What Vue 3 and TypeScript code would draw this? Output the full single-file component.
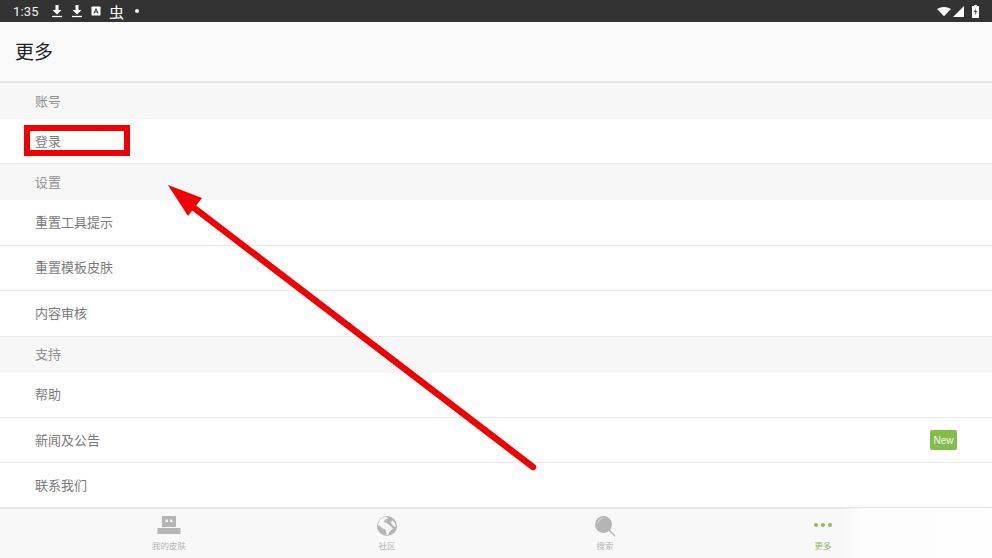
<template>
  <div class="screen">
    <div class="status-bar">
      <span class="clock">1:35</span>
      <div class="status-icons">
        <svg width="12" height="14" viewBox="0 0 12 14"><path d="M4.500 1h3v5h3L6 10.500 1.500 6h3z" fill="#fff" /><path d="M1 12.500h10" stroke="#fff" stroke-width="1.300" /></svg>
        <svg width="12" height="14" viewBox="0 0 12 14"><path d="M4.500 1h3v5h3L6 10.500 1.500 6h3z" fill="#fff" /><path d="M1 12.500h10" stroke="#fff" stroke-width="1.300" /></svg>
        <svg width="10" height="10" viewBox="0 0 11 11"><rect width="10" height="10" x="0.500" y="0.500" rx="1" fill="#fff" /><path d="M3.200 8 5.500 3l2.300 5M4 6.500h3" fill="none" stroke="#333" stroke-width="1.100" /></svg>
        <span class="bug">虫</span>
        <span class="dot"></span>
      </div>
      <div class="status-right">
        <svg width="14" height="11" viewBox="0 0 16 11"><path d="M0 2.500Q8-2 16 2.500L8 11z" fill="#fff" /></svg>
        <svg class="signal" width="11" height="11" viewBox="0 0 11 11"><path d="M11 0v11H0z" fill="#fff" /></svg>
        <svg class="battery" width="7" height="13" viewBox="0 0 7 13"><path d="M2 0h3v1h2v12H0V1h2z" fill="#fff" /><path d="M4 3 2 7h1.500L3 10.500 5 6H3.500z" fill="#333" /></svg>
      </div>
    </div>

    <header class="title-bar">更多</header>

    <main class="list">
      <template v-for="section in sections" :key="section.title">
        <div class="section-title">{{ section.title }}</div>
        <div v-for="row in section.rows" :key="row.label" class="row">
          <span>{{ row.label }}</span>
          <span v-if="row.badge" class="badge">{{ row.badge }}</span>
        </div>
      </template>
    </main>

    <nav class="tabs">
      <div class="tab">
        <svg width="24" height="22" viewBox="0 0 24 22">
          <path d="M5 1h14v11H5z" fill="#b5b5b5" />
          <path d="M0.500 13h23v6h-23z" fill="#b5b5b5" />
          <path d="M8.500 4.500h2.500V7H8.500zM13 4.500h2.500V7H13z" fill="#f6f6f6" />
        </svg>
        <span>我的皮肤</span>
      </div>
      <div class="tab">
        <svg width="22" height="22" viewBox="0 0 22 22">
          <circle cx="11" cy="11" r="10" fill="#b5b5b5" />
          <path d="M12 3.500 9 4.500 7.500 7l3 1 3.500 2.500 3 3-3.500 3-1.500 4-1.500-.5-.5-5-4-2L3 10l-1 1q-.5-5 4-8l4-1.500z" fill="#f6f6f6" />
          <path d="m16 5 3 3 1 4-3-1-2-3z" fill="#f6f6f6" />
        </svg>
        <span>社区</span>
      </div>
      <div class="tab">
        <svg width="22" height="22" viewBox="0 0 22 22">
          <circle cx="9.500" cy="9.500" r="8.500" fill="#b5b5b5" />
          <path d="M3.500 8.500Q4.500 4 8.500 3" fill="none" stroke="#dedede" stroke-width="1" />
          <path d="m15.500 15.500 5.500 5.500" stroke="#b5b5b5" stroke-width="1.400" />
        </svg>
        <span>搜索</span>
      </div>
      <div class="tab active">
        <svg width="22" height="22" viewBox="0 0 22 22">
          <circle cx="4" cy="10" r="2" fill="#8cbb5c" />
          <circle cx="11" cy="10" r="2" fill="#8cbb5c" />
          <circle cx="18" cy="10" r="2" fill="#8cbb5c" />
        </svg>
        <span>更多</span>
      </div>
    </nav>

    <div class="smudge"></div>
    <div class="mark-box"></div>
    <svg class="arrow" width="992" height="558" viewBox="0 0 992 558">
      <path d="M533 467 189 204" stroke="#f00000" stroke-width="6.500" stroke-linecap="round" fill="none" />
      <path d="M168 185 202 198 188 216z" fill="#f00000" />
    </svg>
  </div>
</template>

<script setup lang="ts">
interface Row {
  label: string;
  badge?: string;
}

const sections: { title: string; rows: Row[] }[] = [
  { title: '账号', rows: [{ label: '登录' }] },
  { title: '设置', rows: [{ label: '重置工具提示' }, { label: '重置模板皮肤' }, { label: '内容审核' }] },
  { title: '支持', rows: [{ label: '帮助' }, { label: '新闻及公告', badge: 'New' }, { label: '联系我们' }] },
];
</script>

<style scoped>
.screen {
  position: relative;
  width: 992px;
  height: 558px;
  overflow: hidden;
  display: flex;
  flex-direction: column;
  background: #fff;
  font-family: "Liberation Sans", "Noto Sans CJK SC", sans-serif;
}

.status-bar {
  height: 22px;
  flex: none;
  display: flex;
  align-items: center;
  padding: 0 13px 0 13px;
  background: #333;
  color: #f2f2f2;
}

.clock {
  font-family: Roboto, sans-serif;
  font-size: 13px;
  letter-spacing: 0.2px;
}

.status-icons {
  display: flex;
  align-items: center;
  margin-left: 12px;
  gap: 8px;
}

.bug {
  font-size: 15px;
  color: #fff;
}

.dot {
  width: 4px;
  height: 4px;
  margin-left: 3px;
  border-radius: 50%;
  background: #f2f2f2;
}

.status-right {
  display: flex;
  align-items: center;
  gap: 2px;
  margin-left: auto;
}

.battery {
  margin-left: 6px;
}

.title-bar {
  height: 57px;
  flex: none;
  display: flex;
  align-items: center;
  padding: 0 0 2px 15px;
  background: #fafafa;
  border-bottom: 2px solid #e6e6e6;
  box-sizing: content-box;
  font-size: 19px;
  color: #222;
}

.list {
  flex: 1;
  display: flex;
  flex-direction: column;
  min-height: 0;
}

.section-title {
  height: 34px;
  flex: none;
  display: flex;
  align-items: center;
  padding: 0 0 2px 35px;
  background: #f7f7f7;
  font-size: 13px;
  color: #919191;
}

.row {
  height: 45.400px;
  flex: none;
  box-sizing: border-box;
  display: flex;
  align-items: center;
  justify-content: space-between;
  padding: 0 35px 2px;
  background: #fff;
  border-bottom: 1px solid #ebebeb;
  font-size: 13px;
  color: #7a7a7a;
}

.badge {
  width: 27px;
  height: 20px;
  margin-top: 2px;
  display: flex;
  align-items: center;
  justify-content: center;
  border-radius: 2px;
  background: #82bd4a;
  color: #f4f9ee;
  font-size: 10px;
}

.tabs {
  position: absolute;
  left: 0;
  right: 0;
  bottom: 0;
  height: 49px;
  display: grid;
  grid-template-columns: repeat(4, 1fr);
  padding: 0 60px;
  background: #f8f8f8;
  border-top: 2px solid #e8e8e8;
}

.tab {
  display: flex;
  flex-direction: column;
  align-items: center;
  padding-top: 6px;
  font-size: 8.500px;
  color: #b5b5b5;
}

.tab svg {
  flex: none;
}

.tab span {
  margin-top: 2px;
}

.tab.active {
  color: #8cbb5c;
}

.smudge {
  position: absolute;
  right: 0;
  bottom: 0;
  width: 150px;
  height: 50px;
  background: linear-gradient(90deg, rgba(254, 254, 254, 0), #fdfdfd 15%, #fefefe);
}

.mark-box {
  position: absolute;
  left: 24px;
  top: 125px;
  width: 106px;
  height: 31px;
  box-sizing: border-box;
  border: 6px solid #f00000;
}

.arrow {
  position: absolute;
  left: 0;
  top: 0;
  pointer-events: none;
}
</style>
